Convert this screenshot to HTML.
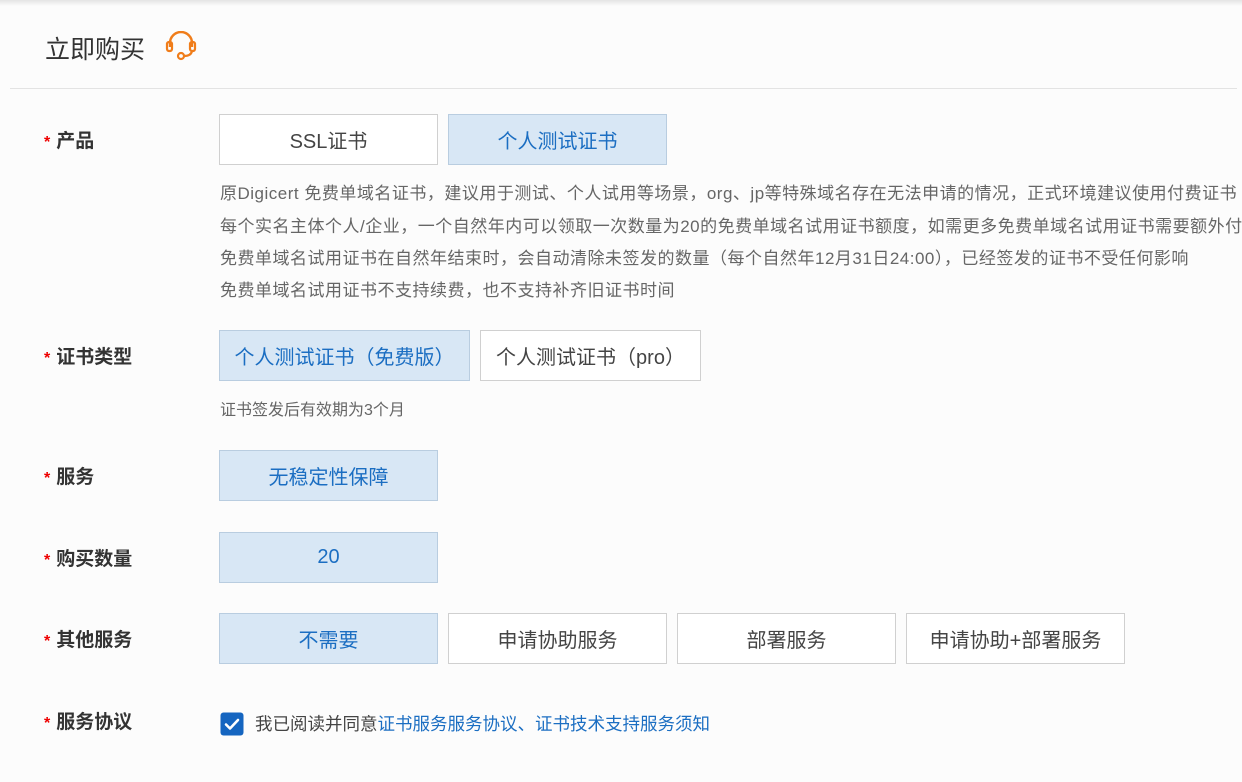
<!DOCTYPE html>
<html><head><meta charset="utf-8"><style>
body{margin:0;width:1242px;height:782px;background:#fcfcfc;font-family:"Liberation Sans","Noto Sans CJK SC",sans-serif;position:relative;overflow:hidden}
.top{position:absolute;left:0;top:0;width:1242px;height:6px;background:linear-gradient(#e4e4e4,#fcfcfc)}
.title{position:absolute;left:45px;top:30px;font-size:25px;color:#333}
.hr{position:absolute;left:10px;top:88px;width:1227px;height:1px;background:#e3e3e3}
.lab{position:absolute;left:44px;font-size:19px;font-weight:bold;color:#333;line-height:24px}
.lab b{color:#e00;font-size:16px;margin-right:6px}
.btn{position:absolute;border:1px solid #d0d0d0;background:#fff;color:#444;font-size:20px;display:flex;align-items:center;justify-content:center;box-sizing:border-box;height:51px}
.sel{background:#d8e7f5;border-color:#b9cde0;color:#1b6ec2}
.d{position:absolute;left:220px;font-size:17px;letter-spacing:0.5px;color:#666;white-space:nowrap;line-height:20px}
</style></head><body>
<div class="top"></div>
<div class="title">立即购买</div>
<svg style="position:absolute;left:164px;top:31px" width="34" height="30" viewBox="0 0 34 30"><path d="M6 16 V12 A11 11 0 0 1 28 12 V16" fill="none" stroke="#f07d1a" stroke-width="2.4"/><rect x="3" y="11" width="5" height="9" rx="2" fill="none" stroke="#f07d1a" stroke-width="2.2"/><rect x="26" y="11" width="5" height="9" rx="2" fill="none" stroke="#f07d1a" stroke-width="2.2"/><path d="M28 20 Q27 25 20 25" fill="none" stroke="#f07d1a" stroke-width="2.2"/><circle cx="17" cy="25" r="3" fill="none" stroke="#f07d1a" stroke-width="2.2"/></svg>
<div class="hr"></div>

<div class="lab" style="top:130px"><b>*</b>产品</div>
<div class="btn" style="left:219px;top:114px;width:219px">SSL证书</div>
<div class="btn sel" style="left:448px;top:114px;width:219px">个人测试证书</div>
<div class="d" style="top:184px">原Digicert 免费单域名证书，建议用于测试、个人试用等场景，org、jp等特殊域名存在无法申请的情况，正式环境建议使用付费证书</div>
<div class="d" style="top:217px">每个实名主体个人/企业，一个自然年内可以领取一次数量为20的免费单域名试用证书额度，如需更多免费单域名试用证书需要额外付费</div>
<div class="d" style="top:249px">免费单域名试用证书在自然年结束时，会自动清除未签发的数量（每个自然年12月31日24:00），已经签发的证书不受任何影响</div>
<div class="d" style="top:281px">免费单域名试用证书不支持续费，也不支持补齐旧证书时间</div>

<div class="lab" style="top:346px"><b>*</b>证书类型</div>
<div class="btn sel" style="left:219px;top:330px;width:251px">个人测试证书（免费版）</div>
<div class="btn" style="left:480px;top:330px;width:221px">个人测试证书（pro）</div>
<div class="d" style="top:401px;font-size:16px;letter-spacing:0">证书签发后有效期为3个月</div>

<div class="lab" style="top:466px"><b>*</b>服务</div>
<div class="btn sel" style="left:219px;top:450px;width:219px">无稳定性保障</div>

<div class="lab" style="top:548px"><b>*</b>购买数量</div>
<div class="btn sel" style="left:219px;top:532px;width:219px">20</div>

<div class="lab" style="top:629px"><b>*</b>其他服务</div>
<div class="btn sel" style="left:219px;top:613px;width:219px">不需要</div>
<div class="btn" style="left:448px;top:613px;width:219px">申请协助服务</div>
<div class="btn" style="left:677px;top:613px;width:219px">部署服务</div>
<div class="btn" style="left:906px;top:613px;width:219px">申请协助+部署服务</div>

<div class="lab" style="top:711px"><b>*</b>服务协议</div>
<svg style="position:absolute;left:220px;top:712px" width="24" height="24" viewBox="0 0 24 24"><rect x="0.5" y="0.5" width="23" height="23" rx="3" fill="#1565c0"/><path d="M6 12.5 L10 16.5 L18 8" fill="none" stroke="#fff" stroke-width="2.6" stroke-linecap="round" stroke-linejoin="round"/></svg>
<div class="d" style="left:255px;top:714px;font-size:17.5px;letter-spacing:0;color:#444">我已阅读并同意<span style="color:#1b6ec2">证书服务服务协议、证书技术支持服务须知</span></div>
</body></html>
